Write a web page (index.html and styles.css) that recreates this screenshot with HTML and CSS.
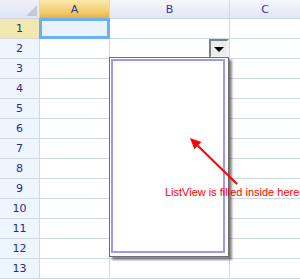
FILE: index.html
```html
<!DOCTYPE html>
<html lang="en">
<head>
    <meta charset="UTF-8">
    <title>Spread - ListView dropdown</title>
    <link rel="stylesheet" href="styles.css">
</head>
<body>
    <div class="sheet">
        <div class="grid">
            <div class="corner"><span class="corner-tri"></span></div>
            <div class="col-head active">A</div>
            <div class="col-head">B</div>
            <div class="col-head">C</div>

            <div class="row-head active">1</div><div class="cell sel"></div><div class="cell"></div><div class="cell"></div>
            <div class="row-head">2</div><div class="cell"></div><div class="cell"></div><div class="cell"></div>
            <div class="row-head">3</div><div class="cell"></div><div class="cell"></div><div class="cell"></div>
            <div class="row-head">4</div><div class="cell"></div><div class="cell"></div><div class="cell"></div>
            <div class="row-head">5</div><div class="cell"></div><div class="cell"></div><div class="cell"></div>
            <div class="row-head">6</div><div class="cell"></div><div class="cell"></div><div class="cell"></div>
            <div class="row-head">7</div><div class="cell"></div><div class="cell"></div><div class="cell"></div>
            <div class="row-head">8</div><div class="cell"></div><div class="cell"></div><div class="cell"></div>
            <div class="row-head">9</div><div class="cell"></div><div class="cell"></div><div class="cell"></div>
            <div class="row-head">10</div><div class="cell"></div><div class="cell"></div><div class="cell"></div>
            <div class="row-head">11</div><div class="cell"></div><div class="cell"></div><div class="cell"></div>
            <div class="row-head">12</div><div class="cell"></div><div class="cell"></div><div class="cell"></div>
            <div class="row-head">13</div><div class="cell"></div><div class="cell"></div><div class="cell"></div>
        </div>

        <div class="active-cell"></div>
        <div class="drop-btn"><span class="drop-tri"></span></div>
        <div class="popup"><div class="popup-inner"></div></div>

        <svg class="arrow" width="300" height="279" viewBox="0 0 300 279">
            <line x1="237" y1="184" x2="196" y2="144" stroke="#ff0000" stroke-width="2"/>
            <polygon points="190,138 201.4,142.1 194.4,149.3" fill="#ff0000"/>
        </svg>
        <div class="note">ListView is filled inside here</div>
    </div>
</body>
</html>
```

FILE: styles.css
```css
body {
    margin: 0;
    font-family: Tahoma, "DejaVu Sans", sans-serif;
    background: #ffffff;
}
.sheet {
    position: relative;
    width: 300px;
    height: 279px;
    overflow: hidden;
}
.grid {
    display: grid;
    grid-template-columns: 39px 69px 119px 70px;
    grid-template-rows: 18px repeat(13, 19px);
    gap: 1px;
    padding: 0 1px 1px 0;
    background: #d0d7e5;
    width: 300px;
}
.corner {
    position: relative;
    background: linear-gradient(#eeeff9, #e2e5f4);
}
.corner-tri {
    position: absolute;
    right: 2px;
    bottom: 2px;
    width: 0;
    height: 0;
    border-left: 11px solid transparent;
    border-bottom: 11px solid #c7c9d6;
}
.col-head {
    background: linear-gradient(#f6f7fd, #e3e6f5);
    color: #33309a;
    font-family: "DejaVu Sans", sans-serif;
    font-size: 11px;
    display: flex;
    align-items: center;
    justify-content: center;
}
.col-head.active {
    background: linear-gradient(#fbe9ac, #f3cf75 60%, #e8b23f);
}
.row-head {
    background: #eef5fd;
    color: #2a2a92;
    font-family: "DejaVu Sans", sans-serif;
    font-size: 11px;
    display: flex;
    align-items: center;
    justify-content: center;
}
.row-head.active {
    background: #f0e8ae;
}
.cell {
    background: #ffffff;
}
.cell.sel {
    background: #e8f2fd;
}
.active-cell {
    position: absolute;
    left: 39px;
    top: 18px;
    width: 65px;
    height: 15px;
    border: 3px solid #6cb0f2;
}
.drop-btn {
    position: absolute;
    left: 209px;
    top: 39px;
    width: 16px;
    height: 15px;
    border: 2px solid;
    border-color: #808080 #f4f4f4 #f4f4f4 #808080;
    background: #ececec;
    display: flex;
    align-items: center;
    justify-content: center;
}
.drop-tri {
    width: 0;
    height: 0;
    border-left: 5px solid transparent;
    border-right: 5px solid transparent;
    border-top: 5px solid #000000;
    margin-top: 1px;
}
.popup {
    position: absolute;
    left: 109px;
    top: 57px;
    width: 116px;
    height: 196px;
    border: 1px solid #6e6e6e;
    background: #ffffff;
    box-shadow: 3px 3px 2px rgba(0, 0, 0, 0.45);
    padding: 1px;
}
.popup-inner {
    width: 110px;
    height: 190px;
    border: 2px solid #9a9af4;
    background: #ffffff;
}
.arrow {
    position: absolute;
    left: 0;
    top: 0;
}
.note {
    position: absolute;
    left: 165px;
    top: 186px;
    color: #ff0000;
    font-family: "Liberation Sans", Arial, sans-serif;
    font-size: 11px;
    white-space: nowrap;
}
```
